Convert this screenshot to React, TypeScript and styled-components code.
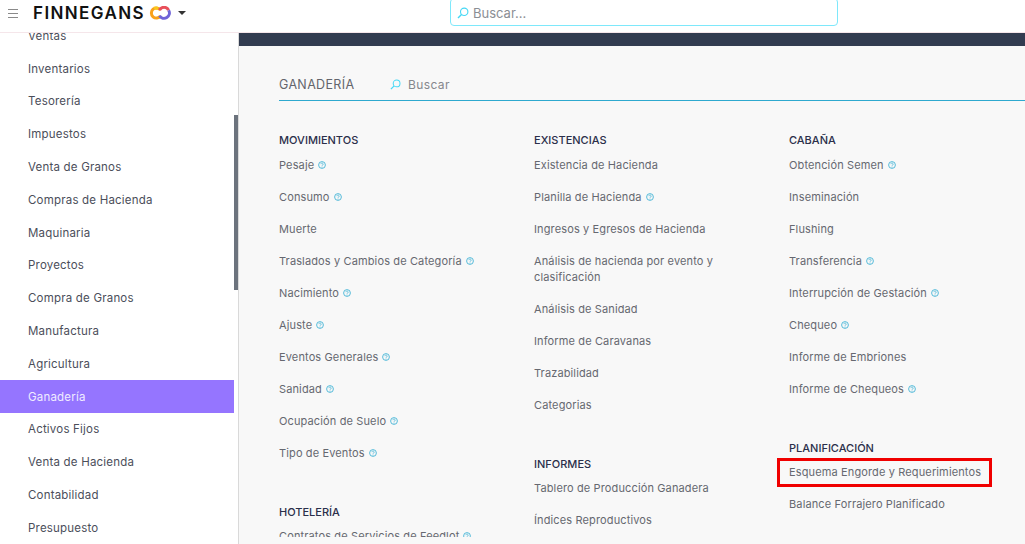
import { createGlobalStyle, styled } from 'styled-components';

const GlobalStyle = createGlobalStyle`
  html, body {
    margin: 0;
    padding: 0;
    height: 544px;
    overflow: hidden;
    background: #ffffff;
    font-family: Inter, "Noto Sans", sans-serif;
  }
  *, *::before, *::after { box-sizing: border-box; }
`;

const Page = styled.div`
  width: 1025px;
  height: 544px;
  display: flex;
  flex-direction: column;
  overflow: hidden;
`;

const Header = styled.header`
  height: 33px;
  flex: none;
  display: flex;
  align-items: flex-start;
  background: #ffffff;
  border-bottom: 1px solid #f5e6ea;
`;

const Brand = styled.div`
  width: 450px;
  height: 26px;
  flex: none;
  display: flex;
  align-items: center;
  padding-left: 8px;
`;

const Burger = styled.span`
  width: 10px;
  height: 9px;
  margin-right: 15px;
  border-top: 1px solid #8a8a8a;
  border-bottom: 1px solid #8a8a8a;
  position: relative;
  &::after {
    content: '';
    position: absolute;
    left: 0;
    right: 0;
    top: 3px;
    height: 1px;
    background: #8a8a8a;
  }
`;

const LogoText = styled.span`
  font-size: 17px;
  font-weight: 600;
  letter-spacing: 1.4px;
  color: #111111;
  margin-right: 4px;
`;

const Caret = styled.span`
  width: 0;
  height: 0;
  margin-left: 7px;
  border-left: 4px solid transparent;
  border-right: 4px solid transparent;
  border-top: 4px solid #333333;
`;

const SearchBox = styled.div`
  width: 388px;
  height: 28px;
  margin-top: -2px;
  display: flex;
  align-items: center;
  gap: 4px;
  padding: 2px 0 0 6px;
  background: #ffffff;
  border: 1px solid #7ee8fb;
  border-radius: 4px;
  color: #8b8e94;
  font-size: 13px;
`;

const Body = styled.div`
  flex: 1;
  min-height: 0;
  display: flex;
`;

const Sidebar = styled.nav`
  width: 239px;
  flex: none;
  position: relative;
  overflow: hidden;
  border-right: 1px solid #d9d9d9;
  background: #ffffff;
`;

const SideList = styled.div`
  width: 234px;
  margin-top: -14px;
  display: flex;
  flex-direction: column;
`;

const SideItem = styled.div<{ $active?: boolean }>`
  height: 32.8px;
  flex: none;
  display: flex;
  align-items: center;
  padding: 1px 0 0 28px;
  font-size: 11.5px;
  letter-spacing: 0.2px;
  color: ${(p) => (p.$active ? '#f0ecff' : '#4b4e5a')};
  background: ${(p) => (p.$active ? '#9575ff' : 'transparent')};
`;

const ScrollThumb = styled.div`
  position: absolute;
  left: 234px;
  top: 82px;
  width: 4px;
  height: 175px;
  background: #6c737d;
`;

const Main = styled.main`
  flex: 1;
  min-width: 0;
  display: flex;
  flex-direction: column;
  background: #f8f8f8;
`;

const TopBand = styled.div`
  height: 13px;
  flex: none;
  background: #323c50;
`;

const Panel = styled.div`
  height: 491px;
  flex: none;
  overflow: hidden;
  padding: 22px 0 0 40px;
`;

const TitleRow = styled.div`
  height: 33px;
  display: flex;
  align-items: center;
  border-bottom: 1px solid #2ea9cf;
  color: #6e7076;
`;

const SectionTitle = styled.span`
  width: 111px;
  font-size: 12.5px;
  letter-spacing: 0.35px;
  color: #63656c;
`;

const TitleSearch = styled.span`
  display: flex;
  align-items: center;
  gap: 7px;
  font-size: 12px;
  letter-spacing: 0.4px;
  color: #85878d;
`;

const Columns = styled.div`
  display: grid;
  grid-template-columns: repeat(3, 255px);
  padding-top: 31px;
`;

const Column = styled.div`
  display: flex;
  flex-direction: column;
`;

const Group = styled.section`
  margin-bottom: 35px;
`;

const GroupTitle = styled.h3`
  margin: 0;
  height: 16.5px;
  font-size: 11px;
  line-height: 16px;
  font-weight: 500;
  color: #2b2f4a;
`;

const Entry = styled.div<{ $marked?: boolean }>`
  position: relative;
  padding: 8px 0;
  width: 210px;
  white-space: ${(p) => (p.$marked ? 'nowrap' : 'normal')};
  font-size: 11px;
  line-height: 16px;
  letter-spacing: 0.13px;
  color: #666870;

  ${(p) =>
    p.$marked &&
    `
    &::after {
      content: '';
      position: absolute;
      left: -12px;
      top: 2px;
      width: 215px;
      height: 29px;
      border: 3px solid #f00000;
    }
  `}
`;

const Help = styled.svg`
  width: 8px;
  height: 8px;
  margin-left: 4px;
  vertical-align: 0;
`;

const HelpIcon = () => (
  <Help viewBox="0 0 16 16" fill="none">
    <circle cx="8" cy="8" r="6.8" stroke="#45b4d6" strokeWidth="1.8" />
    <path d="M5.8 6.3a2.2 2.2 0 1 1 3.4 1.8c-.8.5-1.2.9-1.2 1.7" stroke="#45b4d6" strokeWidth="1.6" />
    <circle cx="8" cy="12" r="1" fill="#45b4d6" />
  </Help>
);

const SearchIcon = ({ size }: { size: number }) => (
  <svg width={size} height={size} viewBox="0 0 12 12" fill="none" stroke="#45d8f5" strokeWidth="1.1">
    <circle cx="7.2" cy="4.8" r="3.7" />
    <path d="M4.5 7.5 1 11" strokeWidth="1.4" />
  </svg>
);

const LogoMark = () => (
  <svg width="22" height="14" viewBox="0 0 22 14" fill="none" strokeWidth="3">
    <path d="M11.5 4.2A5 5 0 1 0 11.5 9.8" stroke="#f9a11b" />
    <path d="M5 2.2A5 5 0 0 1 9 2.6" stroke="#f9c81b" />
    <path d="M10.5 4.2A5 5 0 0 1 19.6 4.2" stroke="#e8505b" />
    <path d="M19.6 4.2A5 5 0 0 1 10.5 9.8" stroke="#6f63d8" />
  </svg>
);

type Item = { label: string; help?: boolean; marked?: boolean };
type ItemGroup = { title: string; items: Item[] };

const sideItems = [
  'Ventas', 'Inventarios', 'Tesorería', 'Impuestos', 'Venta de Granos', 'Compras de Hacienda',
  'Maquinaria', 'Proyectos', 'Compra de Granos', 'Manufactura', 'Agricultura', 'Ganadería',
  'Activos Fijos', 'Venta de Hacienda', 'Contabilidad', 'Presupuesto',
];

const columns: ItemGroup[][] = [
  [
    {
      title: 'MOVIMIENTOS',
      items: [
        { label: 'Pesaje', help: true },
        { label: 'Consumo', help: true },
        { label: 'Muerte' },
        { label: 'Traslados y Cambios de Categoría', help: true },
        { label: 'Nacimiento', help: true },
        { label: 'Ajuste', help: true },
        { label: 'Eventos Generales', help: true },
        { label: 'Sanidad', help: true },
        { label: 'Ocupación de Suelo', help: true },
        { label: 'Tipo de Eventos', help: true },
      ],
    },
    {
      title: 'HOTELERÍA',
      items: [{ label: 'Contratos de Servicios de Feedlot', help: true }],
    },
  ],
  [
    {
      title: 'EXISTENCIAS',
      items: [
        { label: 'Existencia de Hacienda' },
        { label: 'Planilla de Hacienda', help: true },
        { label: 'Ingresos y Egresos de Hacienda' },
        { label: 'Análisis de hacienda por evento y clasificación' },
        { label: 'Análisis de Sanidad' },
        { label: 'Informe de Caravanas' },
        { label: 'Trazabilidad' },
        { label: 'Categorias' },
      ],
    },
    {
      title: 'INFORMES',
      items: [{ label: 'Tablero de Producción Ganadera' }, { label: 'Índices Reproductivos' }],
    },
  ],
  [
    {
      title: 'CABAÑA',
      items: [
        { label: 'Obtención Semen', help: true },
        { label: 'Inseminación' },
        { label: 'Flushing' },
        { label: 'Transferencia', help: true },
        { label: 'Interrupción de Gestación', help: true },
        { label: 'Chequeo', help: true },
        { label: 'Informe de Embriones' },
        { label: 'Informe de Chequeos', help: true },
      ],
    },
    {
      title: 'PLANIFICACIÓN',
      items: [
        { label: 'Esquema Engorde y Requerimientos', marked: true },
        { label: 'Balance Forrajero Planificado' },
      ],
    },
  ],
];

const App = () => (
  <Page>
    <GlobalStyle />
    <Header>
      <Brand>
        <Burger />
        <LogoText>FINNEGANS</LogoText>
        <LogoMark />
        <Caret />
      </Brand>
      <SearchBox>
        <SearchIcon size={12} />
        Buscar...
      </SearchBox>
    </Header>
    <Body>
      <Sidebar>
        <SideList>
          {sideItems.map((item) => (
            <SideItem key={item} $active={item === 'Ganadería'}>
              {item}
            </SideItem>
          ))}
        </SideList>
        <ScrollThumb />
      </Sidebar>
      <Main>
        <TopBand />
        <Panel>
          <TitleRow>
            <SectionTitle>GANADERÍA</SectionTitle>
            <TitleSearch>
              <SearchIcon size={11} />
              Buscar
            </TitleSearch>
          </TitleRow>
          <Columns>
            {columns.map((groups) => (
              <Column key={groups[0].title}>
                {groups.map((group) => (
                  <Group key={group.title}>
                    <GroupTitle>{group.title}</GroupTitle>
                    {group.items.map((item) => (
                      <Entry key={item.label} $marked={item.marked}>
                        {item.label}
                        {item.help && <HelpIcon />}
                      </Entry>
                    ))}
                  </Group>
                ))}
              </Column>
            ))}
          </Columns>
        </Panel>
      </Main>
    </Body>
  </Page>
);

export default App;
